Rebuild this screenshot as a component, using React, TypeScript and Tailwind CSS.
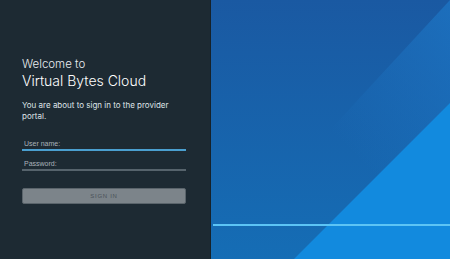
export default function App() {
  return (
    <main className="flex h-[259px] w-[450px] overflow-hidden font-['Inter',sans-serif]">
      <section className="flex w-[211px] shrink-0 flex-col border-r border-[#16222a] bg-[#1d2a33] pl-[22px] pr-[24px] pt-[57px] text-white">
        <p className="text-[11.5px] leading-[14px] font-light text-[#e9edf0]">Welcome to</p>
        <h1 className="text-[14px] leading-[19px] font-light text-white">Virtual Bytes Cloud</h1>
        <p className="mt-[10px] text-[8px] leading-[10.5px] text-[#dfe4e8]">
          You are about to sign in to the provider portal.
        </p>

        <form className="mt-[12px] flex flex-col">
          <input
            placeholder="User name:"
            className="h-[18px] border-b-2 border-[#4a9fd0] bg-transparent px-[2px] pt-[5px] font-['Liberation_Sans',sans-serif] text-[7px] text-white outline-none placeholder:text-[#aab4ba]"
          />
          <input
            type="password"
            placeholder="Password:"
            className="mt-[2px] h-[18px] border-b-2 border-[#56636c] bg-transparent px-[2px] pt-[5px] font-['Liberation_Sans',sans-serif] text-[7px] text-white outline-none placeholder:text-[#aab4ba]"
          />
          <button
            type="button"
            className="mt-[17px] h-[16px] rounded-[2px] border border-[#5a646b] bg-[#7c848a] font-['Liberation_Sans',sans-serif] text-[6px] tracking-[0.12em] text-[#4a5258]"
          >
            SIGN IN
          </button>
        </form>
      </section>

      <section className="relative flex-1 bg-[#1a5ca3]">
        <svg className="absolute inset-0 h-full w-full" viewBox="0 0 239 259" preserveAspectRatio="none">
          <defs>
            <linearGradient id="base" x1="0" y1="0" x2="0" y2="1">
              <stop offset="0" stopColor="#1a59a2" />
              <stop offset="1" stopColor="#156db5" />
            </linearGradient>
            <linearGradient id="faint" x1="1" y1="0" x2="0.5" y2="0.5">
              <stop offset="0" stopColor="#1d78c8" stopOpacity="0.7" />
              <stop offset="1" stopColor="#1d78c8" stopOpacity="0" />
            </linearGradient>
          </defs>
          <rect width="239" height="259" fill="url(#base)" />
          <polygon points="239,0 0,259 239,259" fill="url(#faint)" />
          <polygon points="239,103 83,259 239,259" fill="#128ade" />
          <rect x="2" y="224" width="237" height="2" fill="#5cc4f5" />
        </svg>
      </section>
    </main>
  );
}
